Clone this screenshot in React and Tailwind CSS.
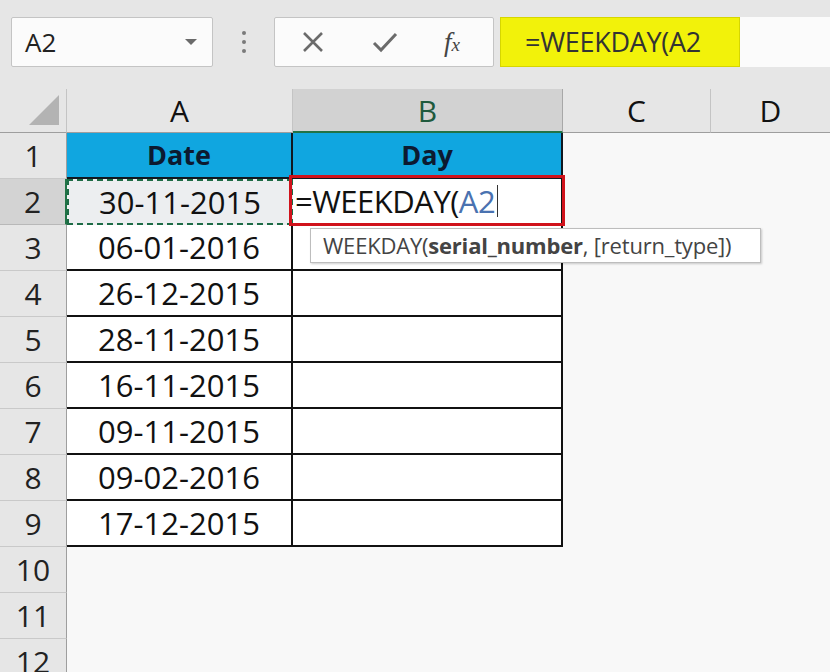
import React from 'react';

const dates = ['30-11-2015', '06-01-2016', '26-12-2015', '28-11-2015', '16-11-2015', '09-11-2015', '09-02-2016', '17-12-2015'];

const font = { fontFamily: '"Open Sans", "Noto Sans", sans-serif' };

const RowHead = ({ n, active }) => (
    <div className={`w-[67px] shrink-0 flex items-center justify-center text-[30px] text-[#222] border-b border-r ${active ? 'bg-[#d3d3d3] border-r-[#217346] border-r-2 border-b-[#b8b8b8]' : 'bg-[#e6e6e6] border-r-[#9e9e9e] border-b-[#c9c9c9]'}`}>
        {n}
    </div>
);

const App = () => {
    return (
        <div className="w-[830px] h-[672px] overflow-hidden bg-[#f8f8f8] text-black" style={font}>
            {/* toolbar */}
            <div className="h-[89px] bg-[#e6e6e6] flex items-start pt-[17px] pl-[11px]">
                <div className="w-[202px] h-[50px] bg-[#fbfbfb] border border-[#c4c4c4] rounded-[2px] flex items-center justify-between pl-[13px] pr-[14px]">
                    <span className="text-[26px] text-[#222]">A2</span>
                    <svg width="14" height="8" viewBox="0 0 14 8"><path d="M1 1h12L7 7z" fill="#6a6a6a" /></svg>
                </div>
                <div className="w-[61px] h-[50px] flex flex-col items-center justify-center gap-[5px]">
                    <span className="w-[4px] h-[4px] rounded-full bg-[#7a7a7a]" />
                    <span className="w-[4px] h-[4px] rounded-full bg-[#7a7a7a]" />
                    <span className="w-[4px] h-[4px] rounded-full bg-[#7a7a7a]" />
                </div>
                <div className="w-[220px] h-[50px] bg-[#fbfbfb] border border-[#c4c4c4] rounded-[2px] flex items-center">
                    <svg className="ml-[26px]" width="24" height="24" viewBox="0 0 24 24"><path d="M3 3l18 18M21 3L3 21" stroke="#6b6b6b" strokeWidth="2.6" /></svg>
                    <svg className="ml-[47px]" width="26" height="22" viewBox="0 0 26 22"><path d="M2 12l7 7L24 3" stroke="#6b6b6b" strokeWidth="3" fill="none" /></svg>
                    <span className="ml-[46px] text-[27px] italic text-[#444] leading-none" style={{ fontFamily: '"Liberation Serif", serif' }}>f<span className="text-[19px]">x</span></span>
                </div>
                <div className="ml-[6px] w-[240px] h-[50px] bg-[#f2f20a] border border-[#d6d600] flex items-center pl-[24px]">
                    <span className="text-[27px] text-[#333] tracking-[-0.3px]">=WEEKDAY(A2</span>
                </div>
                <div className="flex-1 h-[50px] bg-[#fbfbfb]" />
            </div>

            {/* column headers */}
            <div className="flex h-[44px]">
                <div className="w-[67px] shrink-0 bg-[#e6e6e6] border-r border-[#c4c4c4] border-b border-b-[#9e9e9e] flex items-end justify-end pr-[7px] pb-[7px]">
                    <svg width="30" height="30" viewBox="0 0 30 30"><path d="M30 0v30H0z" fill="#b3b3b3" /></svg>
                </div>
                <div className="w-[226px] shrink-0 bg-[#e6e6e6] border-r border-[#c4c4c4] border-b border-b-[#9e9e9e] flex items-center justify-center text-[30px] text-[#111]">A</div>
                <div className="w-[270px] shrink-0 bg-[#d2d2d2] border-r border-[#a8a8a8] border-b-2 border-b-[#217346] flex items-center justify-center text-[30px] text-[#1f5a3d]">B</div>
                <div className="w-[148px] shrink-0 bg-[#e6e6e6] border-r border-[#c4c4c4] border-b border-b-[#9e9e9e] flex items-center justify-center text-[30px] text-[#111]">C</div>
                <div className="flex-1 bg-[#e6e6e6] border-b border-b-[#9e9e9e] flex items-center justify-center text-[30px] text-[#111]">D</div>
            </div>

            {/* row 1 */}
            <div className="flex h-[46px]">
                <RowHead n={1} />
                <div className="w-[226px] shrink-0 bg-[#10a6e0] border-r-2 border-b-2 border-[#101820] flex items-center justify-center text-[27px] font-bold text-[#0c1a30]">Date</div>
                <div className="w-[270px] shrink-0 bg-[#10a6e0] border-r-2 border-b-2 border-[#101820] flex items-center justify-center text-[27px] font-bold text-[#0c1a30]">Day</div>
            </div>

            {dates.map((d, i) => (
                <div key={d + i} className="flex h-[46px]">
                    <RowHead n={i + 2} active={i === 0} />
                    {i === 0 ? (
                        <div className="w-[226px] shrink-0 bg-[#eceef0] border-2 border-dashed border-[#1d6b45] flex items-center justify-center text-[31px] text-[#111]">{d}</div>
                    ) : (
                        <div className="w-[226px] shrink-0 bg-white border-r-2 border-b-2 border-[#111] flex items-center justify-center text-[31px] text-[#111]">{d}</div>
                    )}
                    {i === 0 ? (
                        <div className="relative w-[270px] shrink-0 bg-white border-r-2 border-b-2 border-[#111] flex items-center pl-[2px] text-[31px] text-[#111]">
                            <div className="absolute -left-[4px] -top-[4px] -right-[4px] -bottom-[3px] border-[3px] border-[#d0121b]" />
                            <span className="tracking-[-0.5px]">=WEEKDAY(<span className="text-[#4a72b0]">A2</span></span>
                            <span className="ml-[2px] w-px h-[32px] bg-[#333]" />
                            <div className="absolute left-[17px] top-[49px] w-[451px] h-[35px] bg-white border border-[#bdbdbd] shadow-[1px_1px_2px_rgba(0,0,0,0.2)] flex items-center pl-[12px] text-[22px] text-[#444] whitespace-nowrap z-10 tracking-[-0.2px]">
                                WEEKDAY(<span className="font-bold">serial_number</span>, [return_type])
                            </div>
                        </div>
                    ) : (
                        <div className="w-[270px] shrink-0 bg-white border-r-2 border-b-2 border-[#111]" />
                    )}
                </div>
            ))}

            {[10, 11, 12].map((n) => (
                <div key={n} className="flex h-[46px]">
                    <RowHead n={n} />
                </div>
            ))}
        </div>
    );
};

export default App;
